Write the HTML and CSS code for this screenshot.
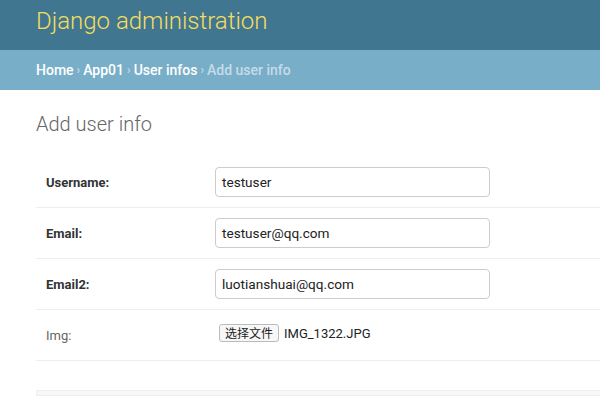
FILE: index.html
```html
<!DOCTYPE html>
<html>
<head>
<meta charset="utf-8">
<link rel="stylesheet" href="styles.css">
</head>
<body>
<div class="header"><span class="branding">Django administration</span></div>
<div class="breadcrumbs"><a>Home</a><span class="sep">›</span><a>App01</a><span class="sep">›</span><a>User infos</a><span class="sep">›</span><span>Add user info</span></div>
<div class="content">
  <h1>Add user info</h1>
  <div class="fieldset">
    <div class="form-row"><label class="required">Username:</label><div class="input">testuser</div></div>
    <div class="form-row"><label class="required">Email:</label><div class="input">testuser@qq.com</div></div>
    <div class="form-row"><label class="required">Email2:</label><div class="input">luotianshuai@qq.com</div></div>
    <div class="form-row"><label>Img:</label><div class="file"><span class="file-btn">选择文件</span><span class="file-name">IMG_1322.JPG</span></div></div>
  </div>
  <div class="submit-row"></div>
</div>
</body>
</html>
```
FILE: styles.css
```css
body {
  margin: 0;
  font-family: Roboto, "Liberation Sans", "Noto Sans CJK SC", sans-serif;
  color: #333;
  background: #fff;
  overflow: hidden;
}
.header {
  height: 50px;
  background: #417690;
  display: flex;
  align-items: center;
  padding: 0 36px;
}
.branding {
  color: #f5dd5d;
  font-size: 24px;
  font-weight: 300;
  margin-top: -8px;
}
.breadcrumbs {
  height: 40px;
  background: #79aec8;
  display: flex;
  align-items: center;
  padding: 0 36px;
  font-size: 14px;
  color: #c4dce8;
  font-weight: 500;
}
.breadcrumbs a {
  color: #fff;
}
.breadcrumbs .sep {
  margin: 0 3px;
  font-size: 12px;
}
.content {
  padding: 22px 0 0 36px;
}
h1 {
  margin: 0 0 21px;
  font-size: 20px;
  line-height: 24px;
  font-weight: 300;
  color: #666;
}
.form-row {
  display: flex;
  align-items: center;
  padding: 10px 10px;
  border-bottom: 1px solid #eee;
  min-height: 30px;
  font-size: 13px;
}
.form-row label {
  width: 169px;
  color: #666;
}
.form-row label.required {
  color: #333;
  font-weight: bold;
}
.input {
  box-sizing: border-box;
  width: 275px;
  height: 30px;
  border: 1px solid #ccc;
  border-radius: 4px;
  padding: 0 6px;
  display: flex;
  align-items: center;
  font-size: 13.6px;
  color: #222;
}
.file {
  display: flex;
  align-items: center;
  margin-top: -4px;
  margin-left: 4px;
}
.file-btn {
  box-sizing: border-box;
  height: 18px;
  padding: 0 5px;
  border: 1px solid #bbb;
  border-radius: 3px;
  background: #f7f7f7;
  font-size: 12px;
  line-height: 16px;
  color: #222;
  font-family: "Noto Sans CJK SC", sans-serif;
}
.file-name {
  margin-left: 5px;
  font-size: 13px;
  color: #222;
}
.submit-row {
  margin-top: 29px;
  height: 4px;
  background: #f8f8f8;
  border: 1px solid #eee;
  border-right: none;
}
```
